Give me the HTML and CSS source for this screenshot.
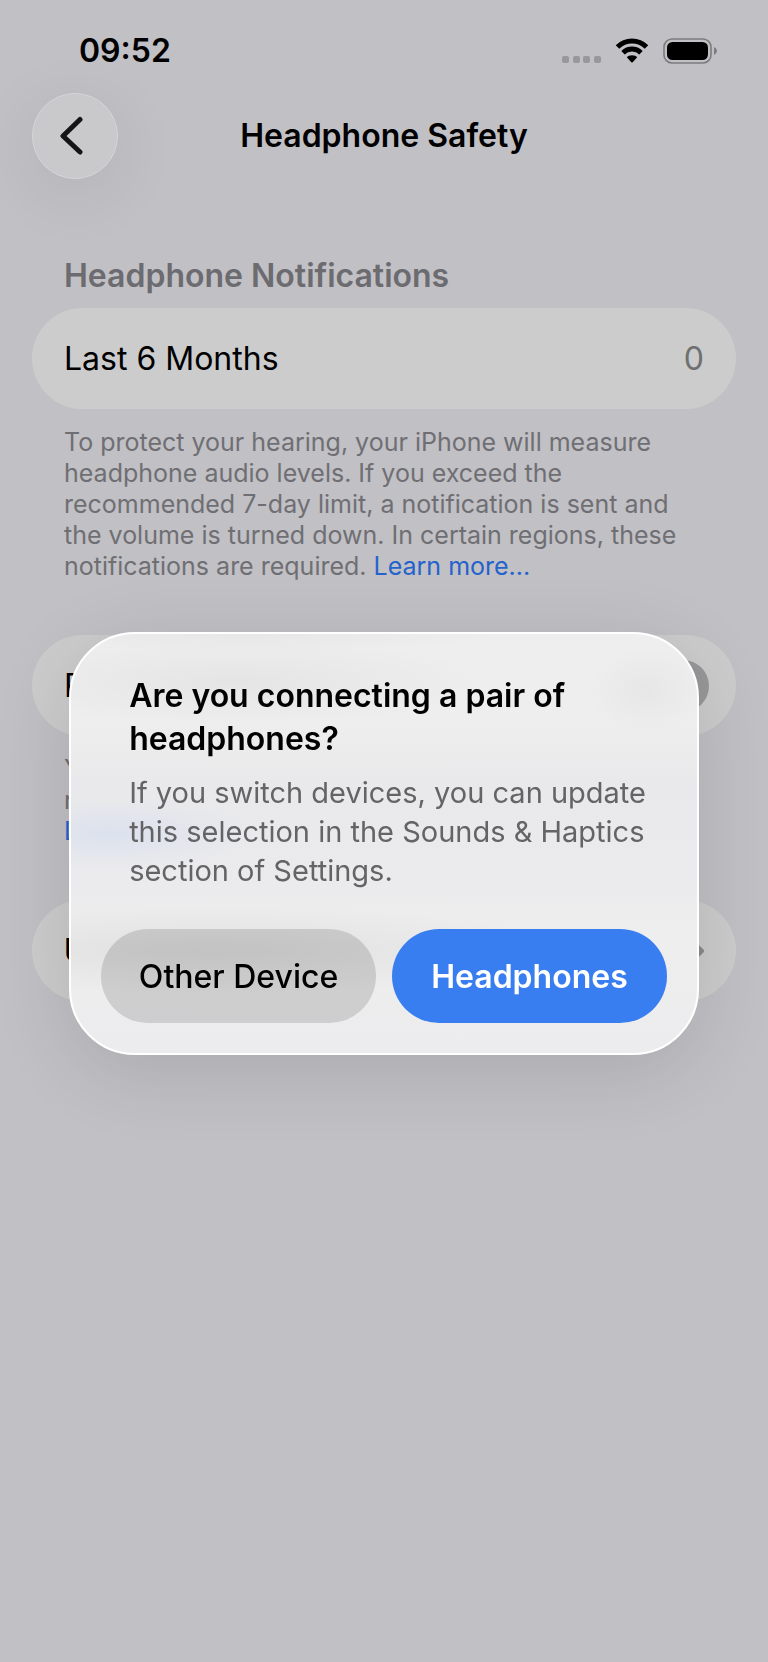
FILE: index.html
```html
<!DOCTYPE html>
<html lang="en">
<head>
  <meta charset="UTF-8" />
  <meta name="viewport" content="width=device-width, initial-scale=1.0"/>
  <title>Headphone Safety</title>
  <link rel="stylesheet" href="styles.css">
</head>
<body>
  <div class="status-bar">
    <span class="time">09:52</span>
    <div class="status-icons">
      <svg class="signal" width="40" height="26" viewBox="0 0 40 26" aria-hidden="true">
        <rect x="1" y="18" width="7" height="7" rx="2"/>
        <rect x="12" y="18" width="7" height="7" rx="2"/>
        <rect x="22" y="18" width="7" height="7" rx="2"/>
        <rect x="33" y="18" width="7" height="7" rx="2"/>
      </svg>
      <svg class="wifi" width="34" height="26" viewBox="0 0 34 26" aria-hidden="true">
        <path d="M2.5 9 A20.5 20.5 0 0 1 31.5 9" fill="none" stroke="#000" stroke-width="5"/>
        <path d="M8 14.7 A12.8 12.8 0 0 1 26 14.7" fill="none" stroke="#000" stroke-width="4.8"/>
        <path d="M12 19.6 Q12 18.4 14 17.8 Q17 16.9 20 17.8 Q22 18.4 22 19.6 L17.7 24.2 Q17 24.9 16.3 24.2 Z"/>
      </svg>
      <svg class="battery" width="54" height="26" viewBox="0 0 54 26" aria-hidden="true">
        <rect x="1" y="1" width="47" height="24" rx="8" fill="none" stroke="#7c7c7e" stroke-width="1.6"/>
        <rect x="4" y="4" width="41" height="18" rx="5.5"/>
        <path d="M51 9 Q54 10.5 54 13 Q54 15.5 51 17 Z" fill="#7c7c7e"/>
      </svg>
    </div>
  </div>

  <header class="nav">
    <button class="back" aria-label="Back">
      <svg width="24" height="40" viewBox="0 0 24 40" aria-hidden="true">
        <path d="M20 3.5 L3 20 L20 36" fill="none" stroke="#151517" stroke-width="5" stroke-linecap="round" stroke-linejoin="round"/>
      </svg>
    </button>
    <h1>Headphone Safety</h1>
  </header>

  <main>
    <section>
      <h2>Headphone Notifications</h2>
      <div class="card">
        <span>Last 6 Months</span>
        <span class="value">0</span>
      </div>
      <p class="note">To protect your hearing, your iPhone will measure headphone audio levels. If you exceed the recommended 7-day limit, a notification is sent and the volume is turned down. In certain regions, these notifications are required. <a href="#">Learn more...</a></p>
    </section>

    <section>
      <div class="card">
        <label for="reduce">Reduce Loud Audio</label>
        <input type="checkbox" class="switch" id="reduce">
      </div>
      <p class="note">Your iPhone can analyze headphone audio and reduce any sound that is over a set level. <br><a href="#">Learn more...</a></p>
    </section>

    <section>
      <a class="card link-row" href="#">
        <span>USB Audio Accessories</span>
        <svg width="14" height="24" viewBox="0 0 14 24" aria-hidden="true">
          <path d="M2 2 L12 12 L2 22" fill="none" stroke="#8b8b8d" stroke-width="4" stroke-linecap="round" stroke-linejoin="round"/>
        </svg>
      </a>
    </section>
  </main>

  <div class="overlay">
    <div class="alert" role="alertdialog" aria-labelledby="alert-title" aria-describedby="alert-text">
      <h3 id="alert-title">Are you connecting a pair of headphones?</h3>
      <p id="alert-text">If you switch devices, you can update this selection in the Sounds &amp; Haptics section of Settings.</p>
      <div class="actions">
        <button class="other">Other Device</button>
        <button class="primary">Headphones</button>
      </div>
    </div>
  </div>
</body>
</html>
```
FILE: styles.css
```css
* {
  box-sizing: border-box;
}

body {
  margin: 0;
  min-height: 100vh;
  background-color: #c1c0c5;
  color: #000;
  font-family: Inter, "Liberation Sans", sans-serif;
  font-size: 32px;
  line-height: 40px;
}

h1, h2, h3, p {
  margin: 0;
}

a {
  color: #2463cc;
  text-decoration: none;
}

button {
  border: none;
  padding: 0;
  font-family: inherit;
  cursor: pointer;
}

.status-bar {
  display: flex;
  justify-content: space-between;
  align-items: center;
  padding: 31px 51px 22px 79px;
}

.time {
  font-size: 32px;
  font-weight: 600;
}

.status-icons {
  display: flex;
  align-items: center;
  gap: 14px;
}

.signal {
  fill: #98989b;
}

.nav {
  display: grid;
  grid-template-columns: 86px 1fr 86px;
  align-items: center;
  padding: 0 32px;
}

.back {
  display: flex;
  align-items: center;
  justify-content: center;
  width: 86px;
  height: 86px;
  padding-right: 6px;
  border: 1px solid #d6d6d8;
  border-radius: 50%;
  background-color: #c9c9cb;
  box-shadow: 0 14px 70px rgba(0, 0, 0, 0.08);
}

h1 {
  font-size: 32px;
  font-weight: 600;
  text-align: center;
}

main {
  padding: 77px 32px 0;
}

section {
  margin-bottom: 53px;
}

h2 {
  padding: 0 32px;
  margin-bottom: 12px;
  font-size: 32px;
  font-weight: 600;
  color: #6b6b70;
}

.card {
  display: flex;
  justify-content: space-between;
  align-items: center;
  height: 101px;
  padding: 0 32px;
  border-radius: 51px;
  background-color: #cccccc;
}

.value {
  color: #707070;
}

.note {
  padding: 18px 32px 0;
  font-size: 25px;
  line-height: 31px;
  color: #6f6f73;
}

.switch {
  appearance: none;
  width: 122px;
  height: 52px;
  margin: 0 -5px 0 0;
  border-radius: 26px;
  background: radial-gradient(circle at 40px 26px, #ccc 24px, #98989a 25px);
}

.link-row {
  color: #000;
  font-weight: 600;
}

.overlay {
  position: fixed;
  inset: 0;
  display: flex;
  align-items: center;
  justify-content: center;
  padding-top: 25px;
}

.alert {
  width: 82%;
  padding: 40px 30px 30px;
  border: 2px solid #fff;
  border-radius: 66px;
  background:
    radial-gradient(ellipse 260px 44px at 26% 48px, rgba(0, 0, 0, 0.04), transparent),
    radial-gradient(ellipse 260px 18px at 28% 0, rgba(0, 0, 0, 0.03), transparent),
    radial-gradient(ellipse 60px 44px at 92% 56px, rgba(0, 0, 0, 0.03), transparent),
    radial-gradient(ellipse 150px 36px at 6% 200px, rgba(90, 150, 255, 0.1), transparent),
    radial-gradient(ellipse 380px 44px at 22% 316px, rgba(0, 0, 0, 0.06), transparent),
    linear-gradient(#eeeeee 20%, #e9e9eb 36%, #ebebed 60%, #eeeeee 72%, #ececee);
  box-shadow: 0 16px 80px rgba(0, 0, 0, 0.12);
}

.alert h3 {
  padding: 0 28px;
  font-size: 32px;
  line-height: 43px;
  font-weight: 600;
}

.alert p {
  padding: 13px 12px 0 28px;
  font-size: 29px;
  line-height: 39px;
  color: #646466;
}

.actions {
  display: grid;
  grid-template-columns: 1fr 1fr;
  gap: 16px;
  margin-top: 39px;
}

.actions button {
  height: 94px;
  border-radius: 47px;
  font-size: 32px;
}

.other {
  background-color: rgba(0, 0, 0, 0.13);
  color: #000;
  font-weight: 500;
}

.primary {
  background-color: #387ef0;
  color: #fff;
  font-weight: 600;
}
```
